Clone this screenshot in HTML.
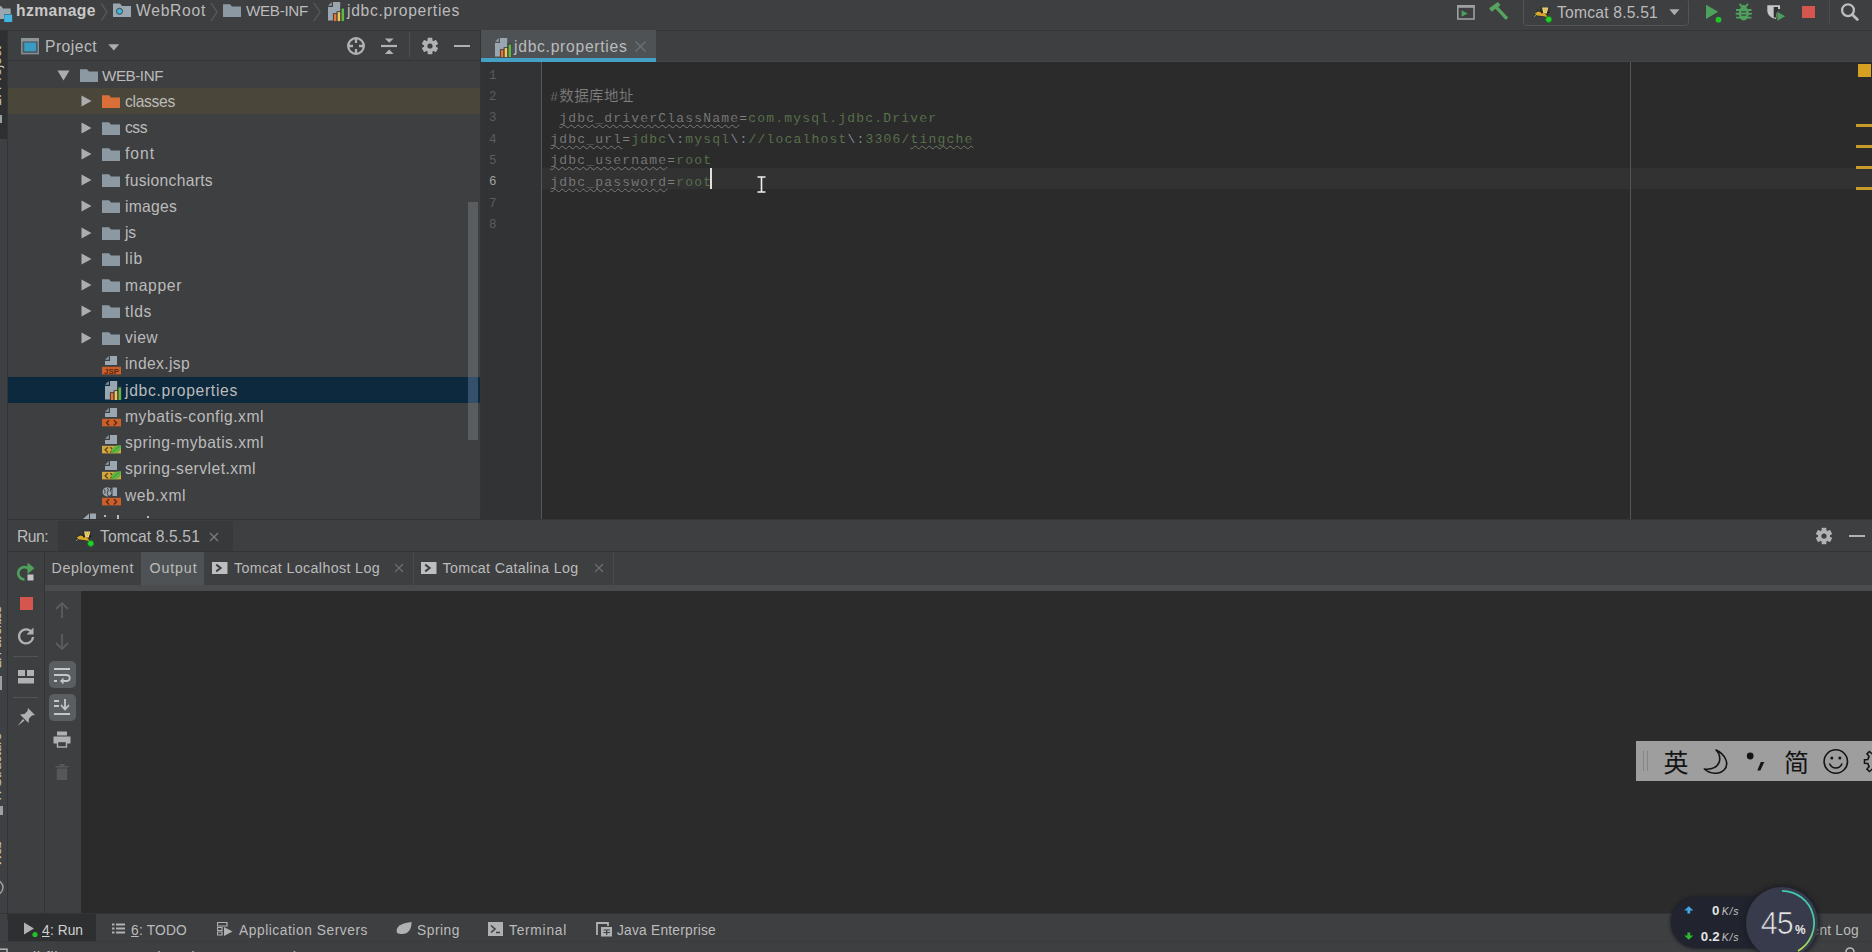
<!DOCTYPE html>
<html><head><meta charset="utf-8"><title>hzmanage</title>
<style>
html,body{margin:0;padding:0;background:#3e3f41;overflow:hidden}
body{width:1872px;height:952px;position:relative;font-family:"Liberation Sans", "Noto Sans CJK SC", sans-serif;font-size:16.5px;color:#bbb}
div,span.t,svg{position:absolute}
span.t{white-space:pre}
.code{font-family:"Liberation Mono","Noto Sans CJK SC",monospace;font-size:13px;letter-spacing:1.2px;line-height:24px;-webkit-text-stroke:0.15px #2b2b2b}

</style></head><body>
<div style="left:0px;top:0px;width:1872px;height:952px;background:#3e3f41;"></div><div style="left:0px;top:30px;width:7px;height:922px;background:#3e4143;"></div><div style="left:0px;top:30px;width:7px;height:109px;background:#2d2f30;"></div><div style="left:7px;top:30px;width:1px;height:890px;background:#323435;"></div><div style="left:0px;top:30px;width:1872px;height:1px;background:#323435;"></div><span class="t" style="left:-16.3px;top:105.50px;line-height:24px;font-size:14.25px;color:#c8c4b8;letter-spacing:-0.020px;transform-origin:0 0;transform:rotate(-90deg);">1: Project</span><div style="left:0px;top:115px;width:2px;height:8px;background:#9da0a2;"></div><span class="t" style="left:-16.3px;top:668.00px;line-height:24px;font-size:14.25px;color:#c8c4b8;letter-spacing:-1.121px;transform-origin:0 0;transform:rotate(-90deg);">2: Favorites</span><div style="left:0px;top:676px;width:2px;height:14px;background:#9da0a2;"></div><span class="t" style="left:-16.3px;top:802.00px;line-height:24px;font-size:14.25px;color:#c8c4b8;letter-spacing:-0.389px;transform-origin:0 0;transform:rotate(-90deg);">7: Structure</span><div style="left:0px;top:806px;width:2.5px;height:9px;background:#9da0a2;"></div><span class="t" style="left:-16.3px;top:867.00px;line-height:24px;font-size:14.25px;color:#c8c4b8;letter-spacing:-1.349px;transform-origin:0 0;transform:rotate(-90deg);">Web</span><svg style="left:0px;top:879px" width="4" height="17" viewBox="0 0 4 17"><circle cx="-4" cy="8.5" r="7" fill="none" stroke="#9da0a2" stroke-width="1.5"/></svg><svg style="left:0px;top:2.5px" width="13" height="20" viewBox="0 0 13 20"><path d="M-6 3 H1 L3 5.5 H10.7 V11 H4 V16 H-6 Z" fill="#9aa7b0"/><rect x="4.2" y="11.5" width="8" height="7.5" fill="#40b6e0"/></svg><span class="t" style="left:16px;top:-0.70px;line-height:24px;font-size:15.67px;color:#c8c8c8;font-weight:bold;letter-spacing:0.430px;">hzmanage</span><svg style="left:100px;top:1.5px" width="8" height="20" viewBox="0 0 8 20"><path d="M1 1 L7 10 L1 19" fill="none" stroke="#575a5c" stroke-width="1.3"/></svg><svg style="left:113px;top:3px" width="18" height="14" viewBox="0 0 18 14"><path d="M0 0.5 H7 L9 3 H18 V14 H0 Z" fill="#9aa7b0"/><circle cx="6.5" cy="8.3" r="3" fill="#40b6e0" stroke="#3e3f41" stroke-width="1"/></svg><span class="t" style="left:136px;top:-0.70px;line-height:24px;font-size:15.67px;color:#bbbbbb;letter-spacing:0.717px;">WebRoot</span><svg style="left:210px;top:1.5px" width="8" height="20" viewBox="0 0 8 20"><path d="M1 1 L7 10 L1 19" fill="none" stroke="#575a5c" stroke-width="1.3"/></svg><svg style="left:223px;top:3px" width="18" height="14" viewBox="0 0 18 14"><path d="M0 1.2 H7 L9 3.6 H18 V14 H0 Z" fill="#8c99a2"/></svg><span class="t" style="left:246px;top:-0.70px;line-height:24px;font-size:15.2px;color:#bbbbbb;letter-spacing:-0.304px;">WEB-INF</span><svg style="left:313px;top:1.5px" width="8" height="20" viewBox="0 0 8 20"><path d="M1 1 L7 10 L1 19" fill="none" stroke="#575a5c" stroke-width="1.3"/></svg><svg style="left:328px;top:2.1999999999999993px" width="16.5" height="19.5" viewBox="0 0 16.5 19.5"><path d="M5 0 H12.2 V18.4 H0 V5 H5 Z" fill="#9aa7b0"/><path d="M0 3.8 L3.8 0 V3.8 Z" fill="#9aa7b0" opacity="0.85"/><path d="M4.9 19.3 V11.2 H8.6 V9.2 H12.6 V5.6 H16.4 V19.3 Z" fill="#33363a"/><rect x="5.8" y="12.1" width="2.6" height="7" fill="#e8743a"/><rect x="9.6" y="10.1" width="2.6" height="9" fill="#f2c55c"/><rect x="13.5" y="6.5" width="2.6" height="12.6" fill="#62b543"/></svg><span class="t" style="left:347px;top:-0.70px;line-height:24px;font-size:15.67px;color:#bbbbbb;letter-spacing:0.686px;">jdbc.properties</span><svg style="left:1457px;top:4.6px" width="18" height="15" viewBox="0 0 18 15"><rect x="0.8" y="0.8" width="16.2" height="13.2" fill="none" stroke="#9da0a2" stroke-width="1.6"/><rect x="0" y="0" width="17.8" height="2.8" fill="#9da0a2"/><path d="M4.6 5.2 L10.6 8.5 L4.6 11.8 Z" fill="#4f9e5e"/></svg><svg style="left:1488px;top:2px" width="22" height="20" viewBox="0 0 22 20"><g fill="#57a35f"><rect x="-5.5" y="-2.1" width="11" height="4.2" transform="translate(6.8,4.8) rotate(-36)"/><path d="M7.2 6.6 L9.8 4.4 L20.2 15.6 L17.8 17.9 Z"/></g></svg><div style="left:1523px;top:-2px;width:164px;height:26px;border:1px solid #515557;border-radius:4px;background:#3e3f41"></div><svg style="left:1534px;top:4px" width="19" height="20" viewBox="0 0 19 20"><path d="M6.3 1.8 L8.6 3.6 H13.6 L15.6 1.8 L15 6.5 L16 8.6 L13.2 9.8 L14.2 13.6 L8 12.6 L2.5 12.4 L0.2 10 L3.5 6.6 L1.8 4.6 L5.8 6.4 L7 5 Z" fill="#2a2a28" opacity="0.8"/><path d="M0.8 9.6 L4.2 7.6 L8 8.4 L12 10.4 L13.6 13 L8 12 L3 11.5 Z" fill="#d9a928"/><path d="M8 3.4 H14.4 L12.8 9.6 H9.4 Z" fill="#ecd578"/><path d="M9.6 5.2 H11 M11.8 5.2 H13.2 M10.6 7 H12" stroke="#b8963a" stroke-width="0.8"/><circle cx="7.9" cy="8.6" r="0.9" fill="#1a1208"/><circle cx="13.9" cy="8.5" r="0.8" fill="#1a1208"/><path d="M0.3 12.8 L2.2 10.6" stroke="#d8d0b0" stroke-width="0.6"/><circle cx="14.7" cy="15.4" r="3" fill="#1fd32a" stroke="#16801c" stroke-width="0.8"/></svg><span class="t" style="left:1557px;top:1.20px;line-height:24px;font-size:15.67px;color:#bbbbbb;letter-spacing:0.204px;">Tomcat 8.5.51</span><svg style="left:1668.5px;top:9.3px" width="11" height="7" viewBox="0 0 11 7"><path d="M0.3 0.2 H10.5 L5.4 6.3 Z" fill="#adadad"/></svg><svg style="left:1703px;top:3px" width="20" height="20" viewBox="0 0 20 20"><path d="M3 1.7 L15.2 8.8 L3 16 Z" fill="#4fa05c"/><circle cx="15.5" cy="16.7" r="2.9" fill="#1fc626"/></svg><svg style="left:1734px;top:3px" width="20" height="19" viewBox="0 0 20 19"><ellipse cx="9.7" cy="10.5" rx="5" ry="7" fill="#4fa05c"/><path d="M6.3 4.5 C6.3 1.3 13.1 1.3 13.1 4.5 Z" fill="#4fa05c"/><path d="M2 7 H17.5 M1.7 10.8 H17.8 M2 14.6 H17.5 M5.5 0.8 L7.5 3 M14 0.8 L12 3" stroke="#4fa05c" stroke-width="1.9"/><path d="M7.3 8.8 H12.1 M7.3 12.2 H12.1" stroke="#3e3f41" stroke-width="1.3"/></svg><svg style="left:1765px;top:3px" width="22" height="20" viewBox="0 0 22 20"><path d="M2.3 2.3 H15 V6 H13 V9 L11 16 C6 15 2.3 12 2.3 7.5 Z" fill="#c6c6c6"/><path d="M8.7 4 H13 V8 L11.5 10 L11 14.5 H8.7 Z" fill="#2e3032"/><path d="M12 8.2 L20.8 13.3 L12 18.4 Z" fill="#4fa05c" stroke="#3e3f41" stroke-width="0.8"/></svg><div style="left:1802.3px;top:6px;width:13px;height:12.2px;background:#d5554f;"></div><div style="left:1829px;top:0px;width:1px;height:24px;background:#4b4e50;"></div><svg style="left:1839px;top:1px" width="21" height="21" viewBox="0 0 21 21"><circle cx="9" cy="9.2" r="5.9" fill="none" stroke="#bdbdbd" stroke-width="2.3"/><path d="M13.2 13.4 L18.4 18.4" stroke="#bdbdbd" stroke-width="2.8" stroke-linecap="round"/></svg><div style="left:8px;top:60px;width:473px;height:1px;background:#323435;"></div><svg style="left:21px;top:38.3px" width="18.2" height="16.4" viewBox="0 0 18.2 16.4"><rect x="0.8" y="0.8" width="16.6" height="14.8" fill="#4a5a63" stroke="#838b90" stroke-width="1.6"/><rect x="0" y="0" width="18.2" height="3.4" fill="#8d9599"/><rect x="3.2" y="4.6" width="11.8" height="8.6" fill="#3a9cc0"/></svg><span class="t" style="left:45px;top:34.50px;line-height:24px;font-size:15.67px;color:#bbbbbb;letter-spacing:0.467px;">Project</span><svg style="left:108px;top:44px" width="12" height="8" viewBox="0 0 12 8"><path d="M0.3 0.3 H11.2 L5.8 6.5 Z" fill="#adadad"/></svg><svg style="left:346px;top:36px" width="20" height="20" viewBox="0 0 20 20"><circle cx="10" cy="10" r="7.8" fill="none" stroke="#afb1b3" stroke-width="2.3"/><path d="M10 1.5 V7 M10 13 V18.5 M1.5 10 H7 M13 10 H18.5" stroke="#afb1b3" stroke-width="2.3"/></svg><svg style="left:381px;top:37px" width="16" height="19" viewBox="0 0 16 19"><path d="M0 9 H16" stroke="#afb1b3" stroke-width="2.2"/><path d="M3.8 1.5 H12.6 L8.2 5.8 Z M3.8 17 H12.6 L8.2 12.4 Z" fill="#afb1b3"/></svg><div style="left:409px;top:32px;width:1px;height:25px;background:#4d5052;"></div><svg style="left:421px;top:37px" width="18" height="18" viewBox="0 0 18 18"><g transform="translate(9,9)"><g fill="#afb1b3"><rect x="-2.4" y="-8.2" width="4.8" height="16.4" rx="0.6" transform="rotate(0)"/><rect x="-2.4" y="-8.2" width="4.8" height="16.4" rx="0.6" transform="rotate(60)"/><rect x="-2.4" y="-8.2" width="4.8" height="16.4" rx="0.6" transform="rotate(120)"/></g><circle r="6" fill="#afb1b3"/><circle r="2.6" fill="#3e3f41"/></g></svg><div style="left:454px;top:44.8px;width:16px;height:2.2px;background:#afb1b3;"></div><div style="left:8px;top:88px;width:472px;height:26px;background:#4a4639;"></div><div style="left:8px;top:377px;width:472px;height:26px;background:#0d293e;"></div><div style="left:468px;top:202px;width:10px;height:238px;background:#5a5d5f;"></div><div style="left:468px;top:377px;width:10px;height:26px;background:#34506a;"></div><svg style="left:57px;top:69.5px" width="13" height="11" viewBox="0 0 13 11"><path d="M0.5 0.5 H12.5 L6.5 10.5 Z" fill="#adadad"/></svg><svg style="left:80px;top:68.0px" width="18" height="14" viewBox="0 0 18 14"><path d="M0 1.2 H7 L9 3.6 H18 V14 H0 Z" fill="#8c99a2"/></svg><span class="t" style="left:102px;top:63.50px;line-height:24px;font-size:15.2px;color:#bbbbbb;letter-spacing:-0.446px;">WEB-INF</span><svg style="left:81px;top:95.25px" width="11" height="12" viewBox="0 0 11 12"><path d="M0.5 0.5 L10.5 6 L0.5 11.5 Z" fill="#adadad"/></svg><svg style="left:102px;top:94.25px" width="18" height="14" viewBox="0 0 18 14"><path d="M0 1.2 H7 L9 3.6 H18 V14 H0 Z" fill="#d9703a"/></svg><span class="t" style="left:125px;top:89.75px;line-height:24px;font-size:15.67px;color:#bbbbbb;letter-spacing:-0.317px;">classes</span><svg style="left:81px;top:121.5px" width="11" height="12" viewBox="0 0 11 12"><path d="M0.5 0.5 L10.5 6 L0.5 11.5 Z" fill="#adadad"/></svg><svg style="left:102px;top:120.5px" width="18" height="14" viewBox="0 0 18 14"><path d="M0 1.2 H7 L9 3.6 H18 V14 H0 Z" fill="#8c99a2"/></svg><span class="t" style="left:125px;top:116.00px;line-height:24px;font-size:15.67px;color:#bbbbbb;letter-spacing:-0.495px;">css</span><svg style="left:81px;top:147.75px" width="11" height="12" viewBox="0 0 11 12"><path d="M0.5 0.5 L10.5 6 L0.5 11.5 Z" fill="#adadad"/></svg><svg style="left:102px;top:146.75px" width="18" height="14" viewBox="0 0 18 14"><path d="M0 1.2 H7 L9 3.6 H18 V14 H0 Z" fill="#8c99a2"/></svg><span class="t" style="left:125px;top:142.25px;line-height:24px;font-size:15.67px;color:#bbbbbb;letter-spacing:0.969px;">font</span><svg style="left:81px;top:174.0px" width="11" height="12" viewBox="0 0 11 12"><path d="M0.5 0.5 L10.5 6 L0.5 11.5 Z" fill="#adadad"/></svg><svg style="left:102px;top:173.0px" width="18" height="14" viewBox="0 0 18 14"><path d="M0 1.2 H7 L9 3.6 H18 V14 H0 Z" fill="#8c99a2"/></svg><span class="t" style="left:125px;top:168.50px;line-height:24px;font-size:15.67px;color:#bbbbbb;letter-spacing:0.298px;">fusioncharts</span><svg style="left:81px;top:200.25px" width="11" height="12" viewBox="0 0 11 12"><path d="M0.5 0.5 L10.5 6 L0.5 11.5 Z" fill="#adadad"/></svg><svg style="left:102px;top:199.25px" width="18" height="14" viewBox="0 0 18 14"><path d="M0 1.2 H7 L9 3.6 H18 V14 H0 Z" fill="#8c99a2"/></svg><span class="t" style="left:125px;top:194.75px;line-height:24px;font-size:15.67px;color:#bbbbbb;letter-spacing:0.253px;">images</span><svg style="left:81px;top:226.5px" width="11" height="12" viewBox="0 0 11 12"><path d="M0.5 0.5 L10.5 6 L0.5 11.5 Z" fill="#adadad"/></svg><svg style="left:102px;top:225.5px" width="18" height="14" viewBox="0 0 18 14"><path d="M0 1.2 H7 L9 3.6 H18 V14 H0 Z" fill="#8c99a2"/></svg><span class="t" style="left:125px;top:221.00px;line-height:24px;font-size:15.67px;color:#bbbbbb;letter-spacing:-0.156px;">js</span><svg style="left:81px;top:252.75px" width="11" height="12" viewBox="0 0 11 12"><path d="M0.5 0.5 L10.5 6 L0.5 11.5 Z" fill="#adadad"/></svg><svg style="left:102px;top:251.75px" width="18" height="14" viewBox="0 0 18 14"><path d="M0 1.2 H7 L9 3.6 H18 V14 H0 Z" fill="#8c99a2"/></svg><span class="t" style="left:125px;top:247.25px;line-height:24px;font-size:15.67px;color:#bbbbbb;letter-spacing:0.776px;">lib</span><svg style="left:81px;top:279.0px" width="11" height="12" viewBox="0 0 11 12"><path d="M0.5 0.5 L10.5 6 L0.5 11.5 Z" fill="#adadad"/></svg><svg style="left:102px;top:278.0px" width="18" height="14" viewBox="0 0 18 14"><path d="M0 1.2 H7 L9 3.6 H18 V14 H0 Z" fill="#8c99a2"/></svg><span class="t" style="left:125px;top:273.50px;line-height:24px;font-size:15.67px;color:#bbbbbb;letter-spacing:0.651px;">mapper</span><svg style="left:81px;top:305.25px" width="11" height="12" viewBox="0 0 11 12"><path d="M0.5 0.5 L10.5 6 L0.5 11.5 Z" fill="#adadad"/></svg><svg style="left:102px;top:304.25px" width="18" height="14" viewBox="0 0 18 14"><path d="M0 1.2 H7 L9 3.6 H18 V14 H0 Z" fill="#8c99a2"/></svg><span class="t" style="left:125px;top:299.75px;line-height:24px;font-size:15.67px;color:#bbbbbb;letter-spacing:0.656px;">tlds</span><svg style="left:81px;top:331.5px" width="11" height="12" viewBox="0 0 11 12"><path d="M0.5 0.5 L10.5 6 L0.5 11.5 Z" fill="#adadad"/></svg><svg style="left:102px;top:330.5px" width="18" height="14" viewBox="0 0 18 14"><path d="M0 1.2 H7 L9 3.6 H18 V14 H0 Z" fill="#8c99a2"/></svg><span class="t" style="left:125px;top:326.00px;line-height:24px;font-size:15.67px;color:#bbbbbb;letter-spacing:0.418px;">view</span><svg style="left:102px;top:355.75px" width="19.5" height="20" viewBox="0 0 19.5 20"><path d="M8 0 H15 V9 H3 V5 H8 Z" fill="#9aa7b0"/><path d="M3 3.8 L6.8 0 V3.8 Z" fill="#9aa7b0" opacity="0.85"/><rect x="0" y="10.8" width="19" height="7.6" fill="#c9602c"/><text x="9.5" y="17.7" font-family="Liberation Sans, sans-serif" font-size="8" font-weight="bold" fill="#5e2710" text-anchor="middle" textLength="15" lengthAdjust="spacingAndGlyphs">JSP</text></svg><span class="t" style="left:125px;top:352.25px;line-height:24px;font-size:15.67px;color:#bbbbbb;letter-spacing:0.356px;">index.jsp</span><svg style="left:105px;top:380.5px" width="16.5" height="19.5" viewBox="0 0 16.5 19.5"><path d="M5 0 H12.2 V18.4 H0 V5 H5 Z" fill="#9aa7b0"/><path d="M0 3.8 L3.8 0 V3.8 Z" fill="#9aa7b0" opacity="0.85"/><path d="M4.9 19.3 V11.2 H8.6 V9.2 H12.6 V5.6 H16.4 V19.3 Z" fill="#33363a"/><rect x="5.8" y="12.1" width="2.6" height="7" fill="#e8743a"/><rect x="9.6" y="10.1" width="2.6" height="9" fill="#f2c55c"/><rect x="13.5" y="6.5" width="2.6" height="12.6" fill="#62b543"/></svg><span class="t" style="left:125px;top:378.50px;line-height:24px;font-size:15.67px;color:#bbbbbb;letter-spacing:0.686px;">jdbc.properties</span><svg style="left:102px;top:408.25px" width="19.5" height="20" viewBox="0 0 19.5 20"><path d="M8 0 H15 V9 H3 V5 H8 Z" fill="#9aa7b0"/><path d="M3 3.8 L6.8 0 V3.8 Z" fill="#9aa7b0" opacity="0.85"/><rect x="0" y="10.8" width="19" height="7.6" fill="#c9602c"/><path d="M7.1 12.2 L4.5 14.8 L7.1 17.4 M11.9 12.2 L14.5 14.8 L11.9 17.4" fill="none" stroke="#5e2710" stroke-width="1.4"/></svg><span class="t" style="left:125px;top:404.75px;line-height:24px;font-size:15.67px;color:#bbbbbb;letter-spacing:0.520px;">mybatis-config.xml</span><svg style="left:102px;top:434.5px" width="19.5" height="20" viewBox="0 0 19.5 20"><path d="M8 0 H15 V9 H3 V5 H8 Z" fill="#9aa7b0"/><path d="M3 3.8 L6.8 0 V3.8 Z" fill="#9aa7b0" opacity="0.85"/><rect x="0" y="10.8" width="19" height="7.6" fill="#d2a741"/><path d="M5.800000000000001 12.2 L3.2 14.8 L5.800000000000001 17.4 M8.4 12.2 L11 14.8 L8.4 17.4" fill="none" stroke="#5e4a12" stroke-width="1.4"/><path d="M9.5 18 C8.5 13 12.5 10.3 19 10.3 C19.5 15 16.5 19.5 9.5 18 Z" fill="#5fb642"/><path d="M10.5 17.5 C12.5 14.8 14.5 13.3 17.5 11.8" stroke="#3d8a2a" stroke-width="0.8" fill="none"/></svg><span class="t" style="left:125px;top:431.00px;line-height:24px;font-size:15.67px;color:#bbbbbb;letter-spacing:0.472px;">spring-mybatis.xml</span><svg style="left:102px;top:460.75px" width="19.5" height="20" viewBox="0 0 19.5 20"><path d="M8 0 H15 V9 H3 V5 H8 Z" fill="#9aa7b0"/><path d="M3 3.8 L6.8 0 V3.8 Z" fill="#9aa7b0" opacity="0.85"/><rect x="0" y="10.8" width="19" height="7.6" fill="#d2a741"/><path d="M5.800000000000001 12.2 L3.2 14.8 L5.800000000000001 17.4 M8.4 12.2 L11 14.8 L8.4 17.4" fill="none" stroke="#5e4a12" stroke-width="1.4"/><path d="M9.5 18 C8.5 13 12.5 10.3 19 10.3 C19.5 15 16.5 19.5 9.5 18 Z" fill="#5fb642"/><path d="M10.5 17.5 C12.5 14.8 14.5 13.3 17.5 11.8" stroke="#3d8a2a" stroke-width="0.8" fill="none"/></svg><span class="t" style="left:125px;top:457.25px;line-height:24px;font-size:15.67px;color:#bbbbbb;letter-spacing:0.463px;">spring-servlet.xml</span><svg style="left:102px;top:487.0px" width="19.5" height="20" viewBox="0 0 19.5 20"><circle cx="5.2" cy="4.8" r="4.6" fill="#9aa7b0"/><path d="M2.2 2.2 Q4 4 2.6 6.5 M5 0.5 Q7.5 3 5.5 5 Q4.5 6.5 6.5 9 M8.5 2 Q7.5 4 9.5 5.5" stroke="#3e3f41" stroke-width="1" fill="none"/><path d="M10.5 0.5 H15 V9 H10.5 Z" fill="#9aa7b0"/><rect x="0" y="10.8" width="19" height="7.6" fill="#c9602c"/><path d="M7.1 12.2 L4.5 14.8 L7.1 17.4 M11.9 12.2 L14.5 14.8 L11.9 17.4" fill="none" stroke="#5e2710" stroke-width="1.4"/></svg><span class="t" style="left:125px;top:483.50px;line-height:24px;font-size:15.67px;color:#bbbbbb;letter-spacing:0.511px;">web.xml</span><svg style="left:80px;top:513px" width="40" height="6" viewBox="0 0 40 6"><path d="M3 6 L9 0.5 V6 Z M10 0.5 H16 V6 H10 Z" fill="#9aa7b0"/><rect x="24" y="2" width="2" height="2" fill="#bbb"/><rect x="37" y="2" width="2" height="4" fill="#bbb"/></svg><div style="left:147px;top:516px;width:2px;height:2px;background:#bbb;"></div><div style="left:480px;top:31px;width:2px;height:489px;background:#323435;"></div><div style="left:482px;top:31px;width:1390px;height:31px;background:#3e3f41;"></div><div style="left:481px;top:30px;width:174.5px;height:28px;background:#4e5254;"></div><div style="left:481px;top:58px;width:174.5px;height:4px;background:#44a0c4;"></div><div style="left:656px;top:61px;width:1216px;height:1px;background:#424547;"></div><svg style="left:495px;top:37.8px" width="16.5" height="19.5" viewBox="0 0 16.5 19.5"><path d="M5 0 H12.2 V18.4 H0 V5 H5 Z" fill="#9aa7b0"/><path d="M0 3.8 L3.8 0 V3.8 Z" fill="#9aa7b0" opacity="0.85"/><path d="M4.9 19.3 V11.2 H8.6 V9.2 H12.6 V5.6 H16.4 V19.3 Z" fill="#33363a"/><rect x="5.8" y="12.1" width="2.6" height="7" fill="#e8743a"/><rect x="9.6" y="10.1" width="2.6" height="9" fill="#f2c55c"/><rect x="13.5" y="6.5" width="2.6" height="12.6" fill="#62b543"/></svg><span class="t" style="left:514px;top:34.70px;line-height:24px;font-size:15.67px;color:#bbbbbb;letter-spacing:0.720px;">jdbc.properties</span><svg style="left:635px;top:41px" width="11" height="11" viewBox="0 0 11 11"><path d="M0.5 0.5 L10.5 10.5 M10.5 0.5 L0.5 10.5" stroke="#6e7173" stroke-width="1.3"/></svg><div style="left:482px;top:62px;width:1390px;height:457px;background:#2b2b2b;"></div><div style="left:482px;top:62px;width:59px;height:457px;background:#313335;"></div><div style="left:541px;top:62px;width:1px;height:457px;background:#555758;"></div><div style="left:542px;top:168px;width:1330px;height:21px;background:#323232;"></div><div style="left:1630px;top:62px;width:1px;height:457px;background:#555555;"></div><div style="left:1858px;top:64px;width:12.5px;height:13px;background:#d6a021;"></div><div style="left:1855.5px;top:124.4px;width:16.5px;height:2.6px;background:#c89a2a;"></div><div style="left:1855.5px;top:145.4px;width:16.5px;height:2.6px;background:#c89a2a;"></div><div style="left:1855.5px;top:166.4px;width:16.5px;height:2.6px;background:#c89a2a;"></div><div style="left:1855.5px;top:187.4px;width:16.5px;height:2.6px;background:#c89a2a;"></div><span class="t" style="left:489px;top:63.70px;line-height:24px;font-size:12.5px;color:#5a5d60;font-family:'Liberation Mono', 'Noto Sans CJK SC', monospace;">1</span><span class="t" style="left:489px;top:85.00px;line-height:24px;font-size:12.5px;color:#5a5d60;font-family:'Liberation Mono', 'Noto Sans CJK SC', monospace;">2</span><span class="t" style="left:489px;top:106.30px;line-height:24px;font-size:12.5px;color:#5a5d60;font-family:'Liberation Mono', 'Noto Sans CJK SC', monospace;">3</span><span class="t" style="left:489px;top:127.60px;line-height:24px;font-size:12.5px;color:#5a5d60;font-family:'Liberation Mono', 'Noto Sans CJK SC', monospace;">4</span><span class="t" style="left:489px;top:148.90px;line-height:24px;font-size:12.5px;color:#5a5d60;font-family:'Liberation Mono', 'Noto Sans CJK SC', monospace;">5</span><span class="t" style="left:489px;top:170.20px;line-height:24px;font-size:12.5px;color:#a4a3a3;font-family:'Liberation Mono', 'Noto Sans CJK SC', monospace;">6</span><span class="t" style="left:489px;top:191.50px;line-height:24px;font-size:12.5px;color:#5a5d60;font-family:'Liberation Mono', 'Noto Sans CJK SC', monospace;">7</span><span class="t" style="left:489px;top:212.80px;line-height:24px;font-size:12.5px;color:#5a5d60;font-family:'Liberation Mono', 'Noto Sans CJK SC', monospace;">8</span><span class="t code" style="left:550.3px;top:84.8px;color:#808080">#<span style="font-size:14.5px;letter-spacing:0.4px">数据库地址</span></span><span class="t code" style="left:559.3px;top:106.6px;"><span style="color:#808080;text-decoration:underline wavy #7a7a7a 1px;text-underline-offset:1.5px;text-decoration-skip-ink:none;">jdbc_driverClassName</span><span style="color:#808080;">=</span><span style="color:#5f7a50;">com.mysql.jdbc.Driver</span></span><span class="t code" style="left:550.3px;top:127.9px;"><span style="color:#808080;text-decoration:underline wavy #7a7a7a 1px;text-underline-offset:1.5px;text-decoration-skip-ink:none;">jdbc_url</span><span style="color:#808080;">=</span><span style="color:#5f7a50;">jdbc</span><span style="color:#8a97a4;">\:</span><span style="color:#5f7a50;">mysql</span><span style="color:#8a97a4;">\:</span><span style="color:#5f7a50;">//localhost</span><span style="color:#8a97a4;">\:</span><span style="color:#5f7a50;">3306/</span><span style="color:#5f7a50;text-decoration:underline wavy #6f7a66 1px;text-underline-offset:1.5px;text-decoration-skip-ink:none;">tingche</span></span><span class="t code" style="left:550.3px;top:149.2px;"><span style="color:#808080;text-decoration:underline wavy #7a7a7a 1px;text-underline-offset:1.5px;text-decoration-skip-ink:none;">jdbc_username</span><span style="color:#808080;">=</span><span style="color:#5f7a50;">root</span></span><span class="t code" style="left:550.3px;top:170.5px;-webkit-text-stroke-color:#323232;"><span style="color:#808080;text-decoration:underline wavy #7a7a7a 1px;text-underline-offset:1.5px;text-decoration-skip-ink:none;">jdbc_password</span><span style="color:#808080;">=</span><span style="color:#5f7a50;">root</span></span><div style="left:710px;top:168px;width:2px;height:21px;background:#e0e0e0;"></div><svg style="left:756px;top:176px" width="11" height="17" viewBox="0 0 11 17"><path d="M1.5 1 H9.5 M1.5 16 H9.5 M5.5 1 V16" stroke="#f0f0f0" stroke-width="1.6"/></svg><div style="left:8px;top:519px;width:1864px;height:1px;background:#323435;"></div><div style="left:8px;top:520px;width:1864px;height:31px;background:#3e3f41;"></div><div style="left:58px;top:521px;width:175px;height:30px;background:#37393b;"></div><div style="left:8px;top:551px;width:1864px;height:1px;background:#323435;"></div><span class="t" style="left:17px;top:525.00px;line-height:24px;font-size:15.67px;color:#bbbbbb;letter-spacing:-0.520px;">Run:</span><svg style="left:76px;top:528px" width="19" height="20" viewBox="0 0 19 20"><path d="M6.3 1.8 L8.6 3.6 H13.6 L15.6 1.8 L15 6.5 L16 8.6 L13.2 9.8 L14.2 13.6 L8 12.6 L2.5 12.4 L0.2 10 L3.5 6.6 L1.8 4.6 L5.8 6.4 L7 5 Z" fill="#2a2a28" opacity="0.8"/><path d="M0.8 9.6 L4.2 7.6 L8 8.4 L12 10.4 L13.6 13 L8 12 L3 11.5 Z" fill="#d9a928"/><path d="M8 3.4 H14.4 L12.8 9.6 H9.4 Z" fill="#ecd578"/><path d="M9.6 5.2 H11 M11.8 5.2 H13.2 M10.6 7 H12" stroke="#b8963a" stroke-width="0.8"/><circle cx="7.9" cy="8.6" r="0.9" fill="#1a1208"/><circle cx="13.9" cy="8.5" r="0.8" fill="#1a1208"/><path d="M0.3 12.8 L2.2 10.6" stroke="#d8d0b0" stroke-width="0.6"/><circle cx="14.7" cy="15.4" r="3" fill="#1fd32a" stroke="#16801c" stroke-width="0.8"/></svg><span class="t" style="left:100px;top:525.00px;line-height:24px;font-size:15.67px;color:#bbbbbb;letter-spacing:0.127px;">Tomcat 8.5.51</span><svg style="left:209px;top:532px" width="10" height="10" viewBox="0 0 10 10"><path d="M1 1 L9 9 M9 1 L1 9" stroke="#7a7d7f" stroke-width="1.3"/></svg><svg style="left:1815px;top:527px" width="18" height="18" viewBox="0 0 18 18"><g transform="translate(9,9)"><g fill="#afb1b3"><rect x="-2.4" y="-8.2" width="4.8" height="16.4" rx="0.6" transform="rotate(0)"/><rect x="-2.4" y="-8.2" width="4.8" height="16.4" rx="0.6" transform="rotate(60)"/><rect x="-2.4" y="-8.2" width="4.8" height="16.4" rx="0.6" transform="rotate(120)"/></g><circle r="6" fill="#afb1b3"/><circle r="2.6" fill="#3e3f41"/></g></svg><div style="left:1849px;top:535px;width:15.5px;height:2.2px;background:#afb1b3;"></div><div style="left:44px;top:552px;width:1px;height:361px;background:#323435;"></div><div style="left:141px;top:552px;width:63px;height:33px;background:#4e5254;"></div><span class="t" style="left:51.5px;top:555.50px;line-height:24px;font-size:14.25px;color:#bbbbbb;letter-spacing:0.645px;">Deployment</span><span class="t" style="left:149.5px;top:555.50px;line-height:24px;font-size:14.25px;color:#bbbbbb;letter-spacing:0.870px;">Output</span><svg style="left:212px;top:562.2px" width="15.5" height="12" viewBox="0 0 15.5 12"><rect width="15.5" height="12" fill="#bcbec0"/><path d="M4.2 2.6 L8.6 6 L4.2 9.4" fill="none" stroke="#3e3f41" stroke-width="2"/></svg><span class="t" style="left:234px;top:555.50px;line-height:24px;font-size:14.25px;color:#bbbbbb;letter-spacing:0.369px;">Tomcat Localhost Log</span><svg style="left:394px;top:563px" width="10" height="10" viewBox="0 0 10 10"><path d="M1 1 L9 9 M9 1 L1 9" stroke="#6a6d6f" stroke-width="1.2"/></svg><div style="left:412.5px;top:552px;width:1px;height:33px;background:#47494b;"></div><div style="left:612.5px;top:552px;width:1px;height:33px;background:#47494b;"></div><svg style="left:421px;top:562.2px" width="15.5" height="12" viewBox="0 0 15.5 12"><rect width="15.5" height="12" fill="#bcbec0"/><path d="M4.2 2.6 L8.6 6 L4.2 9.4" fill="none" stroke="#3e3f41" stroke-width="2"/></svg><span class="t" style="left:442.5px;top:555.50px;line-height:24px;font-size:14.25px;color:#bbbbbb;letter-spacing:0.321px;">Tomcat Catalina Log</span><svg style="left:594px;top:563px" width="10" height="10" viewBox="0 0 10 10"><path d="M1 1 L9 9 M9 1 L1 9" stroke="#6a6d6f" stroke-width="1.2"/></svg><div style="left:45px;top:585px;width:1827px;height:6px;background:#4a4c4e;"></div><div style="left:81px;top:591px;width:1791px;height:322px;background:#2b2b2b;"></div><svg style="left:17px;top:561px" width="20" height="22" viewBox="0 0 20 22"><path d="M7.5 18.5 A6.2 6.2 0 1 1 11.5 7.6" fill="none" stroke="#4fa05c" stroke-width="2.6"/><path d="M10.5 1.5 L17.5 7.3 L10.5 13 Z" fill="#4fa05c"/><rect x="10.5" y="13.5" width="6" height="6" fill="#c4c4c4"/></svg><div style="left:20px;top:597px;width:12.6px;height:12.5px;background:#d5554f;"></div><svg style="left:16px;top:626px" width="20" height="20" viewBox="0 0 20 20"><path d="M15.5 6 A7 7 0 1 0 17 11" fill="none" stroke="#afb1b3" stroke-width="2.2"/><path d="M17.5 1.5 V8.5 H10.5 Z" fill="#afb1b3"/></svg><div style="left:13px;top:656px;width:25px;height:1px;background:#515456;"></div><svg style="left:18px;top:670px" width="16" height="14" viewBox="0 0 16 14"><rect x="0" y="0" width="7" height="6" fill="#afb1b3"/><rect x="9" y="0" width="7" height="6" fill="#afb1b3"/><rect x="0" y="8" width="16" height="5.5" fill="#afb1b3"/></svg><div style="left:13px;top:697px;width:25px;height:1px;background:#515456;"></div><svg style="left:16px;top:707px" width="20" height="20" viewBox="0 0 20 20"><path d="M12 1 L19 8 L16 8.5 L13 11.5 L12.5 16 L4 7.5 L8.5 7 L11.5 4 Z M7 12 L8.5 13.5 L1.5 19 Z" fill="#afb1b3"/></svg><svg style="left:54px;top:601px" width="16" height="18" viewBox="0 0 16 18"><path d="M8 17 V2 M2 8 L8 2 L14 8" fill="none" stroke="#5a5d5f" stroke-width="1.8"/></svg><svg style="left:54px;top:633px" width="16" height="18" viewBox="0 0 16 18"><path d="M8 1 V16 M2 10 L8 16 L14 10" fill="none" stroke="#5a5d5f" stroke-width="1.8"/></svg><div style="left:48.5px;top:661px;width:27.5px;height:27px;background:#5a5e61;border-radius:5px"></div><svg style="left:53px;top:667px" width="18" height="17" viewBox="0 0 18 17"><path d="M1 2 H17 M1 8 H13 C18 8 18 14 13 14 H9 M1 14 H4" fill="none" stroke="#c4c6c8" stroke-width="1.8"/><path d="M10.5 10.5 L7 14 L10.5 17.5 Z" fill="#c4c6c8"/></svg><div style="left:48.5px;top:693.5px;width:27.5px;height:27px;background:#5a5e61;border-radius:5px"></div><svg style="left:53px;top:699px" width="18" height="17" viewBox="0 0 18 17"><path d="M1 2 H6 M1 7 H6 M1 15 H17" stroke="#c4c6c8" stroke-width="1.8"/><path d="M12 0 V9 M8 6 L12 10.5 L16 6" fill="none" stroke="#c4c6c8" stroke-width="1.8"/></svg><svg style="left:53px;top:731px" width="18" height="17" viewBox="0 0 18 17"><rect x="4" y="0.5" width="10" height="4" fill="#afb1b3"/><rect x="0.5" y="5.5" width="17" height="7" fill="#afb1b3"/><rect x="4.5" y="10.5" width="9" height="5.5" fill="#3e3f41" stroke="#afb1b3" stroke-width="1.4"/></svg><svg style="left:55px;top:763px" width="14" height="17" viewBox="0 0 14 17"><path d="M0.5 3 H13.5 V4.5 H0.5 Z M4.5 1 H9.5 V3 H4.5 Z M1.8 5.5 H12.2 V17 H1.8 Z" fill="#55585a"/></svg><div style="left:0px;top:913px;width:1872px;height:1px;background:#323435;"></div><div style="left:8px;top:914px;width:88px;height:27px;background:#2d2f30;"></div><div style="left:0px;top:941px;width:1872px;height:1px;background:#393c3e;"></div><svg style="left:23px;top:921.8px" width="16" height="16" viewBox="0 0 16 16"><path d="M1 0.5 L11 6.5 L1 12.5 Z" fill="#afb1b3"/><circle cx="12" cy="12.5" r="2.6" fill="#22c028"/></svg><span class="t" style="left:42px;top:919.00px;line-height:24px;font-size:13.77px;color:#d0d0d0;text-decoration:underline;">4</span><span class="t" style="left:50px;top:919.00px;line-height:24px;font-size:13.77px;color:#d0d0d0;letter-spacing:0.019px;">: Run</span><svg style="left:112px;top:922.8px" width="13" height="12" viewBox="0 0 13 12"><path d="M0 1.5 H2.5 M4 1.5 H13 M0 5.5 H2.5 M4 5.5 H13 M0 9.5 H2.5 M4 9.5 H13" stroke="#afb1b3" stroke-width="1.8"/></svg><span class="t" style="left:131px;top:919.00px;line-height:24px;font-size:13.77px;color:#bbbbbb;text-decoration:underline;">6</span><span class="t" style="left:139px;top:919.00px;line-height:24px;font-size:13.77px;color:#bbbbbb;letter-spacing:0.180px;">: TODO</span><svg style="left:217px;top:921.8px" width="16" height="15" viewBox="0 0 16 15"><path d="M0.5 0.5 H10 V4 H0.5 Z M0.5 5.5 H5 V8.5 H0.5 Z M0.5 10 H5 V13 H0.5 Z" fill="none" stroke="#afb1b3" stroke-width="1.2"/><path d="M7 5 L15.5 9.5 L7 14 Z" fill="#afb1b3"/></svg><span class="t" style="left:239px;top:919.00px;line-height:24px;font-size:13.77px;color:#bbbbbb;letter-spacing:0.547px;">Application Servers</span><svg style="left:396px;top:920.8px" width="16" height="15" viewBox="0 0 16 15"><path d="M1 12 C-1 5 6 2 15.5 1 C16 9 11 15 2.5 12.5 Z" fill="#afb1b3"/></svg><span class="t" style="left:417px;top:919.00px;line-height:24px;font-size:13.77px;color:#bbbbbb;letter-spacing:0.534px;">Spring</span><svg style="left:488px;top:921.8px" width="15" height="14" viewBox="0 0 15 14"><rect width="15" height="14" fill="#afb1b3"/><path d="M3 3.5 L7 7 L3 10.5 M8 10.5 H12" fill="none" stroke="#3e3f41" stroke-width="1.6"/></svg><span class="t" style="left:509px;top:919.00px;line-height:24px;font-size:13.77px;color:#bbbbbb;letter-spacing:0.746px;">Terminal</span><svg style="left:596px;top:921.8px" width="17" height="15" viewBox="0 0 17 15"><path d="M1 13 V1 H12 V4" fill="none" stroke="#afb1b3" stroke-width="1.8"/><rect x="5" y="5" width="11" height="9.5" fill="#afb1b3"/><path d="M7.5 8 H14 M7.5 10.5 H14 M10.7 8 V13" stroke="#3e3f41" stroke-width="1.2"/></svg><span class="t" style="left:617px;top:919.00px;line-height:24px;font-size:13.77px;color:#bbbbbb;letter-spacing:0.224px;">Java Enterprise</span><span class="t" style="left:1795px;top:919.00px;line-height:24px;font-size:13.77px;color:#bbbbbb;letter-spacing:0.222px;">Event Log</span><svg style="left:0px;top:948px" width="9" height="4" viewBox="0 0 9 4"><rect x="-4" y="1.2" width="11" height="8" fill="none" stroke="#afb1b3" stroke-width="1.6"/></svg><span class="t" style="left:22px;top:945.00px;line-height:24px;font-size:15.2px;color:#bbbbbb;letter-spacing:0.603px;">All files are up-to-date (moments ago)</span><span class="t" style="left:1588px;top:945.00px;line-height:24px;font-size:15.2px;color:#bbbbbb;letter-spacing:0.109px;">6:19</span><span class="t" style="left:1634px;top:945.00px;line-height:24px;font-size:15.2px;color:#bbbbbb;letter-spacing:-0.918px;">CRLF</span><span class="t" style="left:1697px;top:945.00px;line-height:24px;font-size:15.2px;color:#bbbbbb;letter-spacing:-0.606px;">UTF-8</span><svg style="left:1845px;top:946px" width="10" height="6" viewBox="0 0 10 6"><circle cx="5" cy="6" r="4" fill="none" stroke="#bbb" stroke-width="1.6"/></svg><div style="left:1636px;top:741.2px;width:236px;height:39.8px;background:#9e9e9e;"></div><div style="left:1643.2px;top:751px;width:1px;height:20px;background:#848484;"></div><div style="left:1647px;top:751px;width:1px;height:20px;background:#848484;"></div><span class="t" style="left:1663.5px;top:751.00px;line-height:24px;font-size:25px;color:#141414;">英</span><svg style="left:1703px;top:748px" width="28" height="28" viewBox="0 0 28 28"><path d="M13 2 C22 6 27 16 21 22 C16 27 7 26 1.3 21 C9 22 15 19 16.5 13 C17.3 9 16 5 13 2 Z" fill="none" stroke="#141414" stroke-width="1.6" stroke-linejoin="round"/></svg><svg style="left:1744px;top:750px" width="24" height="24" viewBox="0 0 24 24"><circle cx="6.2" cy="6" r="3.4" fill="#141414"/><path d="M16.8 12 H20.3 L16.3 20.6 H13.3 Z" fill="#141414"/></svg><span class="t" style="left:1784px;top:751.00px;line-height:24px;font-size:25px;color:#141414;">简</span><svg style="left:1822px;top:748px" width="28" height="28" viewBox="0 0 28 28"><circle cx="13.8" cy="13.5" r="11.7" fill="none" stroke="#141414" stroke-width="1.6"/><circle cx="9.8" cy="10" r="1.5" fill="#141414"/><circle cx="17.8" cy="10" r="1.5" fill="#141414"/><path d="M7.5 15.5 C10 21.5 17.6 21.5 20.1 15.5" fill="none" stroke="#141414" stroke-width="1.6"/></svg><svg style="left:1862px;top:747px" width="10" height="30" viewBox="0 0 10 30"><g transform="translate(15,14.5)"><path d="M9.2 -2.0 L12.5 -1.7 L12.5 1.7 L9.2 2.0 L7.9 5.1 L10.0 7.6 L7.6 10.0 L5.1 7.9 L2.0 9.2 L1.7 12.5 L-1.7 12.5 L-2.0 9.2 L-5.1 7.9 L-7.6 10.0 L-10.0 7.6 L-7.9 5.1 L-9.2 2.0 L-12.5 1.7 L-12.5 -1.7 L-9.2 -2.0 L-7.9 -5.1 L-10.0 -7.6 L-7.6 -10.0 L-5.1 -7.9 L-2.0 -9.2 L-1.7 -12.5 L1.7 -12.5 L2.0 -9.2 L5.1 -7.9 L7.6 -10.0 L10.0 -7.6 L7.9 -5.1 Z" fill="none" stroke="#141414" stroke-width="1.6"/></g></svg><div style="left:1670.8px;top:897px;width:120px;height:51px;border-radius:25.5px;background:#21232e;box-shadow:0 0 3px 1px rgba(28,29,38,0.85)"></div><svg style="left:1684px;top:906px" width="10" height="8" viewBox="0 0 10 8"><path d="M4.8 0.3 L9.4 4.6 H6.2 V7.6 H3.4 V4.6 H0.2 Z" fill="#3fa9e6"/></svg><svg style="left:1684px;top:932px" width="10" height="8" viewBox="0 0 10 8"><path d="M4.8 7.7 L9.4 3.4 H6.2 V0.4 H3.4 V3.4 H0.2 Z" fill="#2eb82e"/></svg><span class="t" style="left:1712px;top:898.50px;line-height:24px;font-size:13.3px;color:#e4e4e4;font-weight:bold;">0</span><span class="t" style="left:1721.7px;top:899.50px;line-height:24px;font-size:10.45px;color:#c4c4c4;letter-spacing:0.802px;font-style:italic;">K/s</span><span class="t" style="left:1700.8px;top:924.50px;line-height:24px;font-size:13.3px;color:#e4e4e4;font-weight:bold;letter-spacing:0.233px;">0.2</span><span class="t" style="left:1721.7px;top:925.50px;line-height:24px;font-size:10.45px;color:#c4c4c4;letter-spacing:0.802px;font-style:italic;">K/s</span><div style="left:1746px;top:886.8px;width:72px;height:72px;border-radius:36px;background:#373b4b;box-shadow:0 0 4px 2px rgba(28,29,38,0.9)"></div><svg style="left:1746px;top:886.8px" width="72" height="72" viewBox="0 0 72 72"><defs><linearGradient id="rg" x1="0" y1="0" x2="0" y2="1"><stop offset="0" stop-color="#3fc8b0"/><stop offset="0.6" stop-color="#4fcfa0"/><stop offset="1" stop-color="#b4dc4a"/></linearGradient></defs><path d="M36 3.8 A32.2 32.2 0 0 1 52 63.9" fill="none" stroke="url(#rg)" stroke-width="1.7"/></svg><span class="t" style="left:1760.8px;top:910.50px;line-height:24px;font-size:30.5px;color:#e6e6e6;letter-spacing:-0.969px;-webkit-text-stroke:0.7px #373b4b;">45</span><span class="t" style="left:1795px;top:917.50px;line-height:24px;font-size:11.88px;color:#e6e6e6;font-weight:bold;">%</span>
</body></html>
